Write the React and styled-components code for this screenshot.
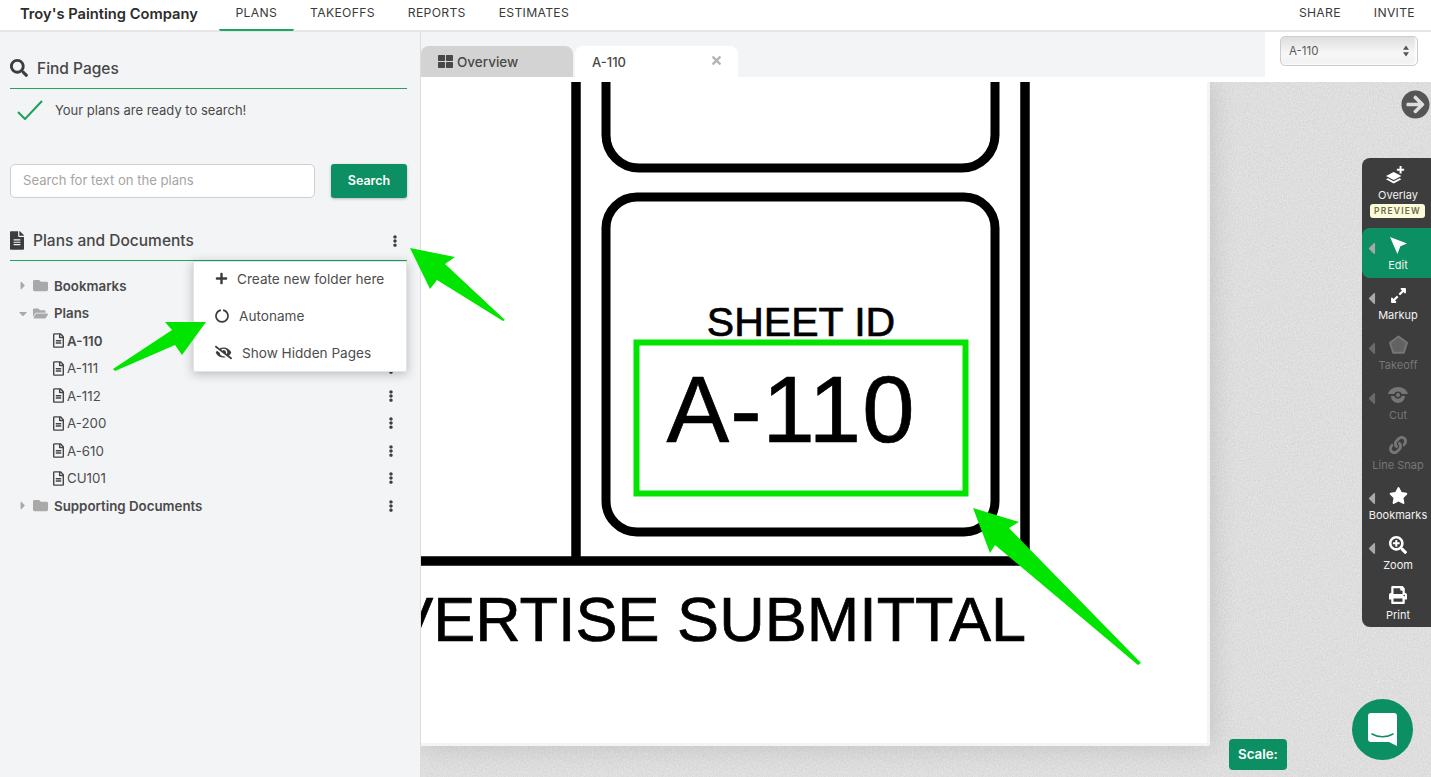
import styled, { createGlobalStyle } from 'styled-components'
import {
  FaSearch, FaFileAlt, FaRegFileAlt, FaFolder, FaFolderOpen, FaPlus, FaEyeSlash,
  FaThLarge, FaStar, FaPrint, FaLink, FaExpandAlt, FaSearchPlus,
  FaArrowCircleRight, FaCaretRight, FaCaretDown, FaCaretLeft, FaTimes, FaEllipsisV,
} from 'react-icons/fa'

const GREEN = '#0c8f63'

const GlobalStyle = createGlobalStyle`
  html, body { margin: 0; height: 100%; overflow: hidden; }
  body { font-family: Inter, Lato, sans-serif; color: #3d3d3d; }
  * { box-sizing: border-box; }
`

const Page = styled.div`
  position: relative;
  display: flex;
  flex-direction: column;
  height: 777px;
  overflow: hidden;
`

const Header = styled.header`
  display: flex;
  align-items: stretch;
  height: 32px;
  flex: none;
  padding: 0 16px 0 20px;
  background: #fff;
  border-bottom: 2px solid #e6e6e6;
`

const Brand = styled.div`
  width: 199px;
  font-size: 14.7px;
  font-weight: 600;
  line-height: 29px;
  color: #2c2c2c;
`

const NavItem = styled.a`
  display: block;
  height: 31px;
  padding: 0 ${p => (p.$last ? 0 : 16.5)}px 0 16.5px;
  font-size: 12.2px;
  letter-spacing: 0.3px;
  line-height: 26px;
  color: #3a3a3a;
  border-bottom: 2px solid ${p => (p.$active ? '#1fa462' : 'transparent')};
  border-radius: 0 0 2px 2px;
`

const Spacer = styled.div`
  flex: 1;
`

const Body = styled.div`
  display: flex;
  flex: 1;
  min-height: 0;
`

const Sidebar = styled.aside`
  flex: none;
  width: 421px;
  padding: 21px 13px 0 10px;
  background: #f3f4f6;
  border-right: 1px solid #dcdcdc;
`

const SectionHead = styled.div`
  display: flex;
  align-items: center;
  height: ${p => p.$h}px;
  padding-bottom: ${p => p.$under}px;
  gap: 9px;
  font-size: 15.5px;
  font-weight: 500;
  color: #474747;
  border-bottom: 1px solid #1fa462;
  svg { flex: none; color: #3d3d3d; }
`

const DocIcon = styled(FaFileAlt)`
  width: 14px;
  height: 19px;
`

const ReadyRow = styled.div`
  display: flex;
  align-items: center;
  gap: 12px;
  height: 42px;
  padding-left: 7px;
  font-size: 13px;
  color: #4a4a4a;
`

const SearchRow = styled.div`
  display: flex;
  gap: 16px;
  margin: 33px 0 25px;
`

const SearchInput = styled.input`
  width: 305px;
  height: 34px;
  padding: 0 12px 2px;
  font: 13.1px Inter, sans-serif;
  background: #fff;
  border: 1px solid #cfcfcf;
  border-radius: 5px;
  &::placeholder { color: #a5a5a5; }
`

const SearchButton = styled.button`
  width: 76px;
  height: 34px;
  padding: 0 0 2px;
  font: 600 12.5px Inter, sans-serif;
  color: #fff;
  background: ${GREEN};
  border: 0;
  border-radius: 3px;
  box-shadow: 0 1px 3px rgba(0, 0, 0, 0.25);
`

const Kebab = styled(FaEllipsisV)`
  font-size: 12px;
  color: #3d3d3d;
`

const HeadKebab = styled.span`
  display: flex;
  margin-left: auto;
  margin-right: 6px;
`

const Tree = styled.ul`
  list-style: none;
  margin: 11px 0 0;
  padding: 0 10px 0 0;
`

const Row = styled.li`
  display: flex;
  align-items: center;
  height: 27.5px;
  padding-left: ${p => (p.$file ? 43 : 9)}px;
  font-size: 13.3px;
  font-weight: ${p => (p.$bold ? 600 : 400)};
  color: ${p => (p.$bold ? '#4a4a4a' : '#4d4d4d')};
`

const Caret = styled.span`
  display: flex;
  justify-content: center;
  width: 8px;
  margin-right: 6px;
  font-size: 13px;
  color: #a9a9a9;
`

const FolderIcon = styled.span`
  display: flex;
  margin-right: 6px;
  font-size: 15px;
  color: #a9a9a9;
`

const FileIcon = styled(FaRegFileAlt)`
  flex: none;
  width: 11px;
  height: 15px;
  margin-right: 3px;
  color: #444;
`

const RowKebab = styled.span`
  display: flex;
  margin-left: auto;
`

const Menu = styled.div`
  position: absolute;
  left: 193px;
  top: 261px;
  width: 214px;
  height: 111px;
  padding-top: 1px;
  background: #fff;
  border: 1px solid #e3e3e3;
  box-shadow: 0 2px 10px rgba(0, 0, 0, 0.25);
`

const MenuItem = styled.div`
  display: flex;
  align-items: center;
  height: 37px;
  padding: 0 0 6px 21px;
  gap: ${p => p.$gap}px;
  font-size: 13.6px;
  color: #4d4d4d;
  svg { flex: none; color: #3d3d3d; }
`

const Main = styled.main`
  display: flex;
  flex-direction: column;
  flex: 1;
  min-width: 0;
`

const TabStrip = styled.div`
  display: flex;
  align-items: flex-end;
  height: 45px;
  flex: none;
  background: #f3f4f6;
`

const Tab = styled.div`
  display: flex;
  align-items: center;
  height: 31px;
  width: ${p => p.$w}px;
  margin-right: 2px;
  padding: 0 ${p => (p.$active ? 15 : 5)}px 0 17px;
  gap: 4px;
  font-size: ${p => (p.$active ? 13 : 13.5)}px;
  font-weight: 500;
  color: #484848;
  background: ${p => (p.$active ? '#fff' : '#d3d3d3')};
  border-radius: 8px 8px 0 0;
`

const TabClose = styled(FaTimes)`
  margin-left: auto;
  margin-bottom: 3px;
  font-size: 13px;
  color: #b5b5b5;
`

const SheetPicker = styled.div`
  display: flex;
  align-items: flex-start;
  height: 45px;
  width: 166px;
  margin-left: auto;
  padding: 4px 13px 0 15px;
  background: #fff;
`

const SheetSelect = styled.div`
  display: flex;
  align-items: center;
  justify-content: space-between;
  width: 138px;
  height: 30px;
  padding: 0 8px;
  font-size: 11.5px;
  color: #5a5a5a;
  background: linear-gradient(#dfdfdf, #f7f7f7 60%, #f0f0f0);
  border: 1px solid #cccccc;
  border-radius: 5px;
  box-shadow: inset -2px -1px 2px rgba(255, 255, 255, 0.9);
`

const Updown = styled.svg`
  width: 6px;
  height: 12px;
  fill: #555;
`

const Canvas = styled.div`
  position: relative;
  flex: 1;
  overflow: hidden;
  background-color: #e7e7e7;
  border-top: 5px solid #fff;
`

const PaperTexture = styled.svg`
  position: absolute;
  inset: 0;
  width: 100%;
  height: 100%;
`

const Sheet = styled.div`
  position: relative;
  width: 789px;
  height: 664px;
  background: #fff;
  border-right: 3px solid #f4f4f4;
  border-bottom: 3px solid #f4f4f4;
  box-shadow: 0 0 28px rgba(0, 0, 0, 0.14);
  border-radius: 0 0 3px 0;
  svg { display: block; }
`

const CollapseButton = styled(FaArrowCircleRight)`
  position: absolute;
  top: 8px;
  right: 1px;
  font-size: 29px;
  color: #555;
`

const ToolPanel = styled.nav`
  position: absolute;
  top: 76px;
  right: 0;
  width: 69px;
  height: 469px;
  background: #3d3d3d;
  border-radius: 8px 0 0 8px;
`

const Tool = styled.div`
  position: relative;
  display: flex;
  flex-direction: column;
  align-items: center;
  height: ${p => p.$h || 50}px;
  padding: 5px 0 0 3px;
  font-size: 11px;
  line-height: 14px;
  color: ${p => (p.$off ? '#767676' : '#f2f2f2')};
  background: ${p => (p.$active ? GREEN : 'transparent')};
  border-radius: ${p => (p.$active ? '8px 0 0 8px' : '0')};
  span { white-space: nowrap; }
`

const ToolIcon = styled.div`
  display: flex;
  align-items: center;
  justify-content: center;
  width: 24px;
  height: 24px;
  margin: 0 ${p => p.$shift || 0}px 1px 0;
  color: ${p => (p.$off ? '#767676' : '#fff')};
  font-size: ${p => p.$size || 18}px;
`

const FlyoutCaret = styled(FaCaretLeft)`
  position: absolute;
  left: 0;
  top: 11px;
  font-size: 19px;
  color: ${p => (p.$off ? '#6a6a6a' : '#a8a8a8')};
`

const PreviewBadge = styled.div`
  margin: 2px 0 0 -1px;
  padding: 0 4px;
  font-size: 8.5px;
  font-weight: 600;
  line-height: 14px;
  letter-spacing: 1.2px;
  color: #6b6b50;
  background: #fdfcd8;
  border-radius: 3px;
`

const ScaleBadge = styled.div`
  position: absolute;
  left: 808px;
  bottom: 7px;
  padding: 0 9px;
  height: 31px;
  font-size: 13.3px;
  font-weight: 600;
  line-height: 31px;
  color: #fff;
  background: ${GREEN};
  border-radius: 4px;
`

const ChatBubble = styled.div`
  position: absolute;
  right: 18px;
  bottom: 17px;
  display: flex;
  align-items: center;
  justify-content: center;
  width: 61px;
  height: 61px;
  background: ${GREEN};
  border-radius: 50%;
`

const Arrows = styled.svg`
  position: absolute;
  inset: 0;
  pointer-events: none;
`

const drawingFont = '"Liberation Sans", Arial, sans-serif'

const Drawing = () => (
  <svg width="786" height="661" viewBox="421 82 786 661">
    <g fill="none" stroke="#000" strokeWidth="9.5">
      <path d="M576 82V561M1025 82V561M421 561H1030" />
      <path d="M606 82V135a33 33 0 0 0 33 33H962a33 33 0 0 0 33-33V82" strokeWidth="9" />
      <rect x="606" y="197" width="389" height="335" rx="31" strokeWidth="9" />
    </g>
    <rect x="636.500" y="342.500" width="329" height="151" fill="none" stroke="#00e400" strokeWidth="6" />
    <g stroke="#000" strokeWidth="0.7">
      <text x="801" y="336" fontFamily={drawingFont} fontSize="41" textAnchor="middle">SHEET ID</text>
      <text x="791" y="442" fontFamily={drawingFont} fontSize="94" letterSpacing="1" textAnchor="middle">A-110</text>
      <text x="1026" y="641" fontFamily={drawingFont} fontSize="63" textAnchor="end">ADVERTISE SUBMITTAL</text>
    </g>
  </svg>
)

const OverlayIcon = () => (
  <svg width="19" height="19" viewBox="0 0 21 21" fill="#fff">
    <path d="M8.500 6.500L17 11l-8.500 4.500L0 11z" />
    <path d="M2 13.500l6.500 3.400 6.500-3.400 2 1.200-8.500 4.600L0 14.700z" />
    <path d="M15 0h2.200v3H20v2.200h-2.800v3H15v-3h-3V3h3z" />
  </svg>
)

const CursorIcon = () => (
  <svg width="19" height="19" viewBox="0 0 19 19" fill="#fff">
    <path d="M1 1l17 6.500-6.600 2.800L8.400 18z" />
  </svg>
)

const TakeoffIcon = () => (
  <svg width="21" height="21" viewBox="0 0 21 21" fill="#626262" stroke="#767676" strokeLinejoin="round">
    <path d="M10.500 1.500l8.500 6.200-3.200 10H5.200L2 7.700z" strokeWidth="2" />
  </svg>
)

const CutIcon = () => (
  <svg width="20" height="18" viewBox="0 0 20 18" fill="#767676">
    <path d="M0 8C1 4 5 1 10 1s9 3 10 7h-6a4.500 4.500 0 0 0-8 0z" />
    <path d="M3 10h3.200a4 4 0 0 0 7.600 0H17a7 7 0 0 1-14 0z" />
    <circle cx="10" cy="9" r="2" />
  </svg>
)

const ChatIcon = () => (
  <svg width="29" height="33" viewBox="0 0 29 33">
    <path d="M3 0h23a3 3 0 0 1 3 3v30l-8-4H3a3 3 0 0 1-3-3V3a3 3 0 0 1 3-3z" fill="#fff" />
    <path d="M4 21c6 3.500 15 3.500 21 0" fill="none" stroke={GREEN} strokeWidth="1.500" strokeLinecap="round" />
  </svg>
)

const AutonameIcon = () => (
  <svg width="14" height="14" viewBox="0 0 15 15" fill="none" stroke="#3d3d3d" strokeWidth="1.800">
    <path d="M6.300 1.200a6.400 6.400 0 1 0 2.400 0" />
  </svg>
)

const files = ['A-111', 'A-112', 'A-200', 'A-610', 'CU101']

const tools = [
  { label: 'Edit', icon: <CursorIcon />, caret: true, active: true },
  { label: 'Markup', icon: <FaExpandAlt />, caret: true, size: 17 },
  { label: 'Takeoff', icon: <TakeoffIcon />, caret: true, off: true },
  { label: 'Cut', icon: <CutIcon />, caret: true, off: true },
  { label: 'Line Snap', icon: <FaLink />, off: true },
  { label: 'Bookmarks', icon: <FaStar />, caret: true, size: 19 },
  { label: 'Zoom', icon: <FaSearchPlus />, caret: true },
  { label: 'Print', icon: <FaPrint /> },
]

const App = () => (
  <Page>
    <GlobalStyle />
    <Header>
      <Brand>Troy's Painting Company</Brand>
      <NavItem $active>PLANS</NavItem>
      <NavItem>TAKEOFFS</NavItem>
      <NavItem>REPORTS</NavItem>
      <NavItem>ESTIMATES</NavItem>
      <Spacer />
      <NavItem>SHARE</NavItem>
      <NavItem $last>INVITE</NavItem>
    </Header>
    <Body>
      <Sidebar>
        <SectionHead $h={36} $under={5}>
          <FaSearch size={18} />
          Find Pages
        </SectionHead>
        <ReadyRow>
          <svg width="26" height="20" viewBox="0 0 26 20" fill="none" stroke="#1fa05a" strokeWidth="2">
            <path d="M1 12l7 7L25 1" />
          </svg>
          Your plans are ready to search!
        </ReadyRow>
        <SearchRow>
          <SearchInput placeholder="Search for text on the plans" />
          <SearchButton>Search</SearchButton>
        </SearchRow>
        <SectionHead $h={38} $under={2}>
          <DocIcon />
          Plans and Documents
          <HeadKebab><Kebab /></HeadKebab>
        </SectionHead>
        <Tree>
          <Row $bold>
            <Caret><FaCaretRight /></Caret>
            <FolderIcon><FaFolder /></FolderIcon>
            Bookmarks
          </Row>
          <Row $bold>
            <Caret><FaCaretDown /></Caret>
            <FolderIcon><FaFolderOpen /></FolderIcon>
            Plans
          </Row>
          <Row $file $bold>
            <FileIcon />
            A-110
          </Row>
          {files.map(name => (
            <Row $file key={name}>
              <FileIcon />
              {name}
              <RowKebab><Kebab /></RowKebab>
            </Row>
          ))}
          <Row $bold>
            <Caret><FaCaretRight /></Caret>
            <FolderIcon><FaFolder /></FolderIcon>
            Supporting Documents
            <RowKebab><Kebab /></RowKebab>
          </Row>
        </Tree>
      </Sidebar>
      <Main>
        <TabStrip>
          <Tab $w={152}>
            <FaThLarge size={15} />
            Overview
          </Tab>
          <Tab $active $w={163}>
            A-110
            <TabClose />
          </Tab>
          <SheetPicker>
            <SheetSelect>
              A-110
              <Updown viewBox="0 0 7 13">
                <path d="M3.500 0L7 5H0zM3.500 13L0 8h7z" />
              </Updown>
            </SheetSelect>
          </SheetPicker>
        </TabStrip>
        <Canvas>
          <PaperTexture>
            <filter id="paper">
              <feTurbulence type="fractalNoise" baseFrequency="0.8 0.6" numOctaves="3" seed="4" />
              <feColorMatrix values="0 0 0 0 0  0 0 0 0 0  0 0 0 0 0  0 0 0 0.12 -0.02" />
            </filter>
            <rect width="100%" height="100%" filter="url(#paper)" />
          </PaperTexture>
          <Sheet>
            <Drawing />
          </Sheet>
          <CollapseButton />
          <ToolPanel>
            <Tool $h={70}>
              <ToolIcon $shift={5}><OverlayIcon /></ToolIcon>
              <span>Overlay</span>
              <PreviewBadge>PREVIEW</PreviewBadge>
            </Tool>
            {tools.map(t => (
              <Tool key={t.label} $active={t.active} $off={t.off}>
                {t.caret && <FlyoutCaret $off={t.off} />}
                <ToolIcon $off={t.off} $size={t.size}>{t.icon}</ToolIcon>
                <span>{t.label}</span>
              </Tool>
            ))}
          </ToolPanel>
          <ScaleBadge>Scale:</ScaleBadge>
          <ChatBubble><ChatIcon /></ChatBubble>
        </Canvas>
      </Main>
    </Body>
    <Menu>
      <MenuItem $gap={9}><FaPlus size={13} />Create new folder here</MenuItem>
      <MenuItem $gap={10}><AutonameIcon />Autoname</MenuItem>
      <MenuItem $gap={10}><FaEyeSlash size={17} />Show Hidden Pages</MenuItem>
    </Menu>
    <Arrows width="1431" height="777" viewBox="0 0 1431 777" fill="#00e400">
      <path d="M410 248L455 257 445 264 505 320 503 321 437 280 430 289z" />
      <path d="M206 322L165 322 172 330 113 369 115 371 175 345 182 355z" />
      <path d="M973 508L1019 522 1009 528 1141 663 1138 665 995 545 990 553z" />
    </Arrows>
  </Page>
)

export default App
